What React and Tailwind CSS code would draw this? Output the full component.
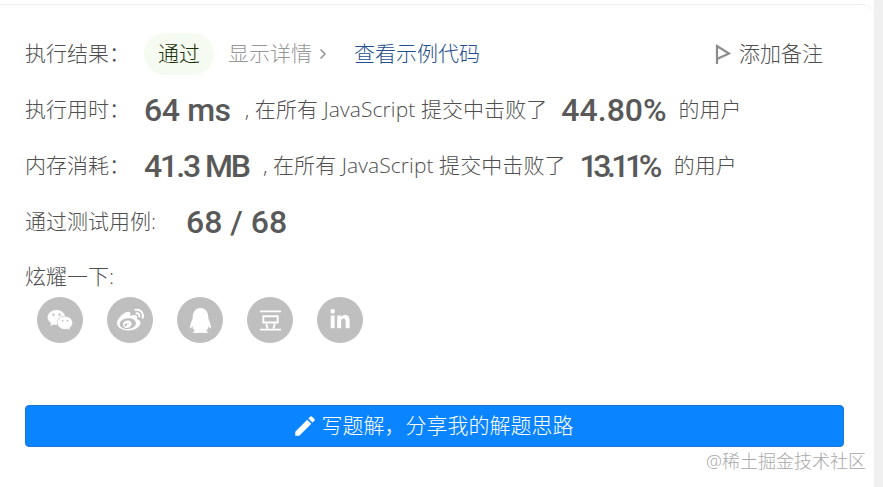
import React from 'react';
import { ChevronRight } from 'lucide-react';
import { FaWeixin, FaWeibo, FaQq, FaLinkedinIn } from 'react-icons/fa';
import { MdEdit } from 'react-icons/md';

const cjk = "font-['Open_Sans','Noto_Sans_CJK_SC',sans-serif]";
const num = "font-['Roboto','Noto_Sans_CJK_SC',sans-serif] font-medium text-[#595959] text-[32px]";

// 豆瓣 logo is thinner than the one in the icon packs
function DoubanIcon({ size }) {
  return (
    <svg width={size} height={size} viewBox="0 0 24 24" fill="none" stroke="currentColor" strokeWidth="2">
      <path d="M1 2.5h22M4.5 7.5h15v6.5h-15zM7.5 15.5l1.5 5M16.5 15.5l-1.5 5M1 21.5h22" />
    </svg>
  );
}

const shares = [
  { id: 'wechat', Icon: FaWeixin, size: 26 },
  { id: 'weibo', Icon: FaWeibo, size: 27 },
  { id: 'qq', Icon: FaQq, size: 25 },
  { id: 'douban', Icon: DoubanIcon, size: 23 },
  { id: 'linkedin', Icon: FaLinkedinIn, size: 22 },
];

function StatRow({ label, value, valueTrack, pct, pctTrack, userGap }) {
  return (
    <div className="flex items-center h-[56px]">
      <span className="w-[119px] shrink-0 text-[#4f4f4f]">{label}</span>
      <span className={`${num} ${valueTrack} whitespace-pre`}>{value}</span>
      <span className="ml-[14px] text-[#4f4f4f] tracking-[0.08px] whitespace-pre">, 在所有 JavaScript 提交中击败了</span>
      <span className={`${num} ${pctTrack} ml-[14px]`}>{pct}</span>
      <span className={`${userGap} text-[#4f4f4f]`}>的用户</span>
    </div>
  );
}

export default function App() {
  return (
    <div className={`${cjk} flex w-[883px] h-[487px] bg-white overflow-hidden text-[21px] font-light`}>
      <div className="w-[874px] shrink-0 pt-[4px]">
        <div className="relative h-[483px] rounded-tr-[12px] border-t border-[#eeeeee] pt-[21px] pl-[25px] pr-[30px]">
          <div className="flex items-center h-[56px]">
            <span className="w-[119px] shrink-0 text-[#4f4f4f]">执行结果：</span>
            <span className="w-[70px] h-[42px] flex items-center justify-center rounded-[21px] bg-[#f6fbf2] text-[#1a3009]">通过</span>
            <span className="ml-[14px] text-[#969696]">显示详情</span>
            <ChevronRight size={16} strokeWidth={2.5} className="ml-[3px] text-[#969696]" />
            <span className="ml-[23px] text-[#1f4f8f]">查看示例代码</span>
            <svg width="16" height="22" viewBox="0 0 16 22" className="ml-auto mr-[8px]">
              <path d="M2 21V3l12 7.5L2 16" fill="none" stroke="#8c8c8c" strokeWidth="2.2" />
            </svg>
            <span className="text-[#4f4f4f] mr-[21px]">添加备注</span>
          </div>
          <StatRow label="执行用时：" value="64 ms" valueTrack="tracking-[-0.4px]" pct="44.80%" pctTrack="tracking-[0px]" userGap="ml-[12px]" />
          <StatRow label="内存消耗：" value="41.3 MB" valueTrack="tracking-[-2.1px]" pct="13.11%" pctTrack="tracking-[-4.5px]" userGap="ml-[16px]" />
          <div className="flex items-center h-[56px]">
            <span className="w-[161px] shrink-0 text-[#4f4f4f]">通过测试用例:</span>
            <span className={`${num} whitespace-pre`}>68 / 68</span>
          </div>
          <div className="h-[47px] pt-[11px] text-[#4f4f4f]">炫耀一下:</div>
          <div className="flex gap-[24px] pl-[12px]">
            {shares.map(({ id, Icon, size }) => (
              <div key={id} className="w-[46px] h-[46px] rounded-full bg-[#bfbfbf] flex items-center justify-center text-white">
                <Icon size={size} />
              </div>
            ))}
          </div>
          <button className="mt-[62px] w-[819px] h-[42px] flex items-center justify-center gap-[4px] pr-[4px] rounded-[4px] bg-[#0a84ff] border border-[#1976d2] text-white">
            <MdEdit size={26} />
            写题解，分享我的解题思路
          </button>
          <span className="absolute left-[706px] top-[443px] text-[18px] text-[#a8a8a8]">@稀土掘金技术社区</span>
        </div>
      </div>
      <div className="flex-1 bg-[#f0f0f0]" />
    </div>
  );
}
